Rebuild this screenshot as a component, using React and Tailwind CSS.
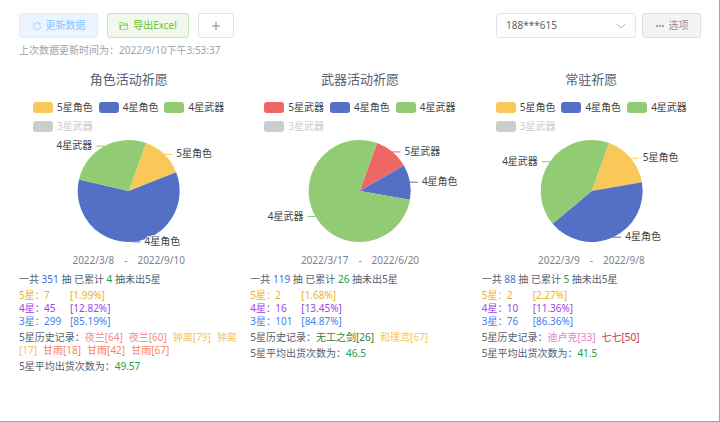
const YELLOW = "#fac858";
const BLUE = "#5470c6";
const GREEN = "#91cc75";
const RED = "#ee6666";

const pools = [
  {
    title: "角色活动祈愿",
    slices: [
      { name: "5星角色", value: 7, color: YELLOW },
      { name: "4星角色", value: 31, color: BLUE },
      { name: "4星武器", value: 14, color: GREEN },
    ],
    from: "2022/3/8",
    to: "2022/9/10",
    total: 351,
    pity: 4,
    counts: [
      [7, "1.99%"],
      [45, "12.82%"],
      [299, "85.19%"],
    ],
    history: [
      { name: "夜兰", pulls: 64, className: "text-[#f5868f]" },
      { name: "夜兰", pulls: 60, className: "text-[#f5868f]" },
      { name: "钟离", pulls: 79, className: "text-[#f8c45c]" },
      { name: "钟离", pulls: 17, className: "text-[#f8c45c]" },
      { name: "甘雨", pulls: 18, className: "text-[#fc8452]" },
      { name: "甘雨", pulls: 42, className: "text-[#fc8452]" },
      { name: "甘雨", pulls: 67, className: "text-[#fc8452]" },
    ],
    average: "49.57",
  },
  {
    title: "武器活动祈愿",
    slices: [
      { name: "5星武器", value: 2, color: RED },
      { name: "4星角色", value: 2, color: BLUE },
      { name: "4星武器", value: 14, color: GREEN },
    ],
    from: "2022/3/17",
    to: "2022/6/20",
    total: 119,
    pity: 26,
    counts: [
      [2, "1.68%"],
      [16, "13.45%"],
      [101, "84.87%"],
    ],
    history: [
      { name: "无工之剑", pulls: 26, className: "text-[#3b7a37]" },
      { name: "和璞鸢", pulls: 67, className: "text-[#f8c45c]" },
    ],
    average: "46.5",
  },
  {
    title: "常驻祈愿",
    slices: [
      { name: "5星角色", value: 2, color: YELLOW },
      { name: "4星角色", value: 5, color: BLUE },
      { name: "4星武器", value: 5, color: GREEN },
    ],
    from: "2022/3/9",
    to: "2022/9/8",
    total: 88,
    pity: 5,
    counts: [
      [2, "2.27%"],
      [10, "11.36%"],
      [76, "86.36%"],
    ],
    history: [
      { name: "迪卢克", pulls: 33, className: "text-[#ea7ccc]" },
      { name: "七七", pulls: 50, className: "text-[#c23b46]" },
    ],
    average: "41.5",
  },
];

const rarities = [
  { label: "5星：", className: "text-[#eab322]" },
  { label: "4星：", className: "text-[#9c45e8]" },
  { label: "3星：", className: "text-[#3f83f0]" },
];

const CX = 108;
const CY = 55;
const R = 51;

// degrees clockwise from the top of the circle
function pointAt(deg) {
  const rad = (deg * Math.PI) / 180;
  return [CX + R * Math.sin(rad), CY - R * Math.cos(rad)];
}

function PieChart({ slices, title }) {
  const sum = slices.reduce((acc, s) => acc + s.value, 0);
  let angle = 20;
  const parts = slices.map((s) => {
    const start = angle;
    const end = start + (s.value / sum) * 360;
    angle = end;
    const [x1, y1] = pointAt(start);
    const [x2, y2] = pointAt(end);
    const [mx, my] = pointAt((start + end) / 2);
    const large = end - start > 180 ? 1 : 0;
    return {
      ...s,
      d: `M${CX} ${CY}L${x1} ${y1}A${R} ${R} 0 ${large} 1 ${x2} ${y2}Z`,
      mx,
      my,
      dir: mx > CX ? 1 : -1,
    };
  });

  return (
    <svg
      viewBox="0 0 216 112"
      className="block h-28 w-full overflow-visible"
      role="img"
      aria-label={title}
    >
      {parts.map((p) => (
        <path key={p.name} d={p.d} fill={p.color} />
      ))}
      {parts.map((p) => (
        <g key={p.name}>
          <path d={`M${p.mx} ${p.my}h${p.dir * 8}`} stroke={p.color} />
          <text
            x={p.mx + p.dir * 12}
            y={p.my}
            dy="3"
            textAnchor={p.dir > 0 ? "start" : "end"}
            className="fill-[#444] stroke-white text-[10px]"
            strokeWidth="2"
            paintOrder="stroke"
          >
            {p.name}
          </text>
        </g>
      ))}
    </svg>
  );
}

function LegendItem({ name, color, off }) {
  return (
    <li className="flex items-center gap-1">
      <span
        className="h-[11px] w-5 rounded-[3px]"
        style={{ backgroundColor: color }}
      />
      <span className={off ? "text-[#ccc]" : "text-[#444]"}>{name}</span>
    </li>
  );
}

function PoolCard({ pool }) {
  return (
    <section className="min-w-0">
      <h2 className="text-center text-[13px] leading-5 text-[#566070]">
        {pool.title}
      </h2>

      {/* Legend */}
      <ul className="mt-3 mr-2 ml-[14px] flex flex-wrap gap-[6px]">
        {pool.slices.map((s) => (
          <LegendItem key={s.name} name={s.name} color={s.color} />
        ))}
        <LegendItem name="3星武器" color="#ccc" off />
      </ul>

      <div className="mt-[3px]">
        <PieChart slices={pool.slices} title={pool.title} />
      </div>

      {/* Date range */}
      <p className="mt-[6px] flex justify-center gap-[10px] text-[#7b838f]">
        <span>{pool.from}</span>
        <span>-</span>
        <span>{pool.to}</span>
      </p>

      {/* Stats */}
      <p className="mt-[6px]">
        一共 <span className="text-[#3b6fd8]">{pool.total}</span> 抽 已累计{" "}
        <span className="text-[#16a34a]">{pool.pity}</span> 抽未出5星
      </p>
      <dl className="mt-[3px]">
        {rarities.map((r, i) => (
          <div key={r.label} className={`flex ${r.className}`}>
            <dt className="w-[25px] whitespace-nowrap">{r.label}</dt>
            <dd className="w-[26px]">{pool.counts[i][0]}</dd>
            <dd>[{pool.counts[i][1]}]</dd>
          </div>
        ))}
      </dl>
      <p className="mt-[3px]">
        5星历史记录：
        {pool.history.map((h, i) => (
          <span key={i}>
            <span className={h.className}>
              {h.name}
              <wbr />[{h.pulls}]
            </span>
            <span className="inline-block w-[6px]"> </span>
          </span>
        ))}
      </p>
      <p className="mt-[3px]">
        5星平均出货次数为：
        <span className="text-[#16a34a]">{pool.average}</span>
      </p>
    </section>
  );
}

export default function App() {
  return (
    <main
      lang="zh-CN"
      className="min-h-screen border-r border-b border-[#a3a3a3] bg-white pt-[13px] pr-[18px] pl-[19px] font-['Noto_Sans','Noto_Sans_CJK_SC',sans-serif] text-[10px] leading-[13px] text-[#566070]"
    >
      {/* Toolbar */}
      <header className="flex items-center justify-between">
        <div className="flex gap-[9px]">
          <button
            type="button"
            disabled
            className="flex h-[25px] w-[79px] items-center justify-center gap-1 rounded-[3px] border border-[#d9ecff] bg-[#ecf5ff] text-[#8cc5ff]"
          >
            <svg viewBox="0 0 1024 1024" className="size-[10px]" fill="currentColor">
              <path d="M784.512 230.272v-50.56a32 32 0 1 1 64 0v149.056a32 32 0 0 1-32 32H667.52a32 32 0 1 1 0-64h92.992A320 320 0 1 0 524.8 833.152a320 320 0 0 0 320-320h64a384 384 0 0 1-384 384 384 384 0 0 1-384-384 384 384 0 0 1 643.712-282.88z" />
            </svg>
            更新数据
          </button>
          <button
            type="button"
            className="flex h-[25px] w-[82px] items-center justify-center gap-1 rounded-[3px] border border-[#c2e7b0] bg-[#f0f9eb] text-[#67c23a]"
          >
            <svg viewBox="0 0 1024 1024" className="size-[10px]" fill="currentColor">
              <path d="M878.08 448H241.92l-96 384h636.16l96-384zM832 384v-64H485.76L357.504 192H128v448l57.92-231.744A32 32 0 0 1 216.96 384H832zm-24.96 512H96a32 32 0 0 1-32-32V160a32 32 0 0 1 32-32h287.872l128.384 128H864a32 32 0 0 1 32 32v96h23.04a32 32 0 0 1 31.04 39.744l-112 448A32 32 0 0 1 807.04 896z" />
            </svg>
            导出Excel
          </button>
          <button
            type="button"
            aria-label="添加"
            className="flex h-[25px] w-9 items-center justify-center rounded-[3px] border border-[#e2e4ea] bg-white text-[#606266]"
          >
            <svg viewBox="0 0 10 10" className="size-[10px]" stroke="currentColor" strokeWidth="0.8">
              <path d="M5 1v8M1 5h8" />
            </svg>
          </button>
        </div>

        <div className="flex gap-[6px]">
          <div className="relative">
            <select
              aria-label="账号"
              className="h-[25px] w-[140px] appearance-none rounded-[3px] border border-[#e2e4ea] bg-white px-[9px] text-[#606266]"
            >
              <option>188***615</option>
            </select>
            <svg
              viewBox="0 0 10 10"
              className="pointer-events-none absolute top-2 right-[10px] size-[10px]"
              fill="none"
              stroke="#b4b7bd"
            >
              <path d="M1 3l4 4 4-4" />
            </svg>
          </div>
          <button
            type="button"
            className="flex h-[25px] w-[59px] items-center justify-center gap-1 rounded-[3px] border border-[#dedfe0] bg-[#f4f4f5] text-[#909399]"
          >
            <svg viewBox="0 0 10 10" className="size-[10px]" fill="currentColor">
              <circle cx="2" cy="5" r="1.1" />
              <circle cx="5" cy="5" r="1.1" />
              <circle cx="8" cy="5" r="1.1" />
            </svg>
            选项
          </button>
        </div>
      </header>

      <p className="mt-[6px] text-[#9ca3af]">
        上次数据更新时间为：2022/9/10下午3:53:37
      </p>

      <div className="mt-3 grid grid-cols-3 gap-3">
        {pools.map((pool) => (
          <PoolCard key={pool.title} pool={pool} />
        ))}
      </div>
    </main>
  );
}
